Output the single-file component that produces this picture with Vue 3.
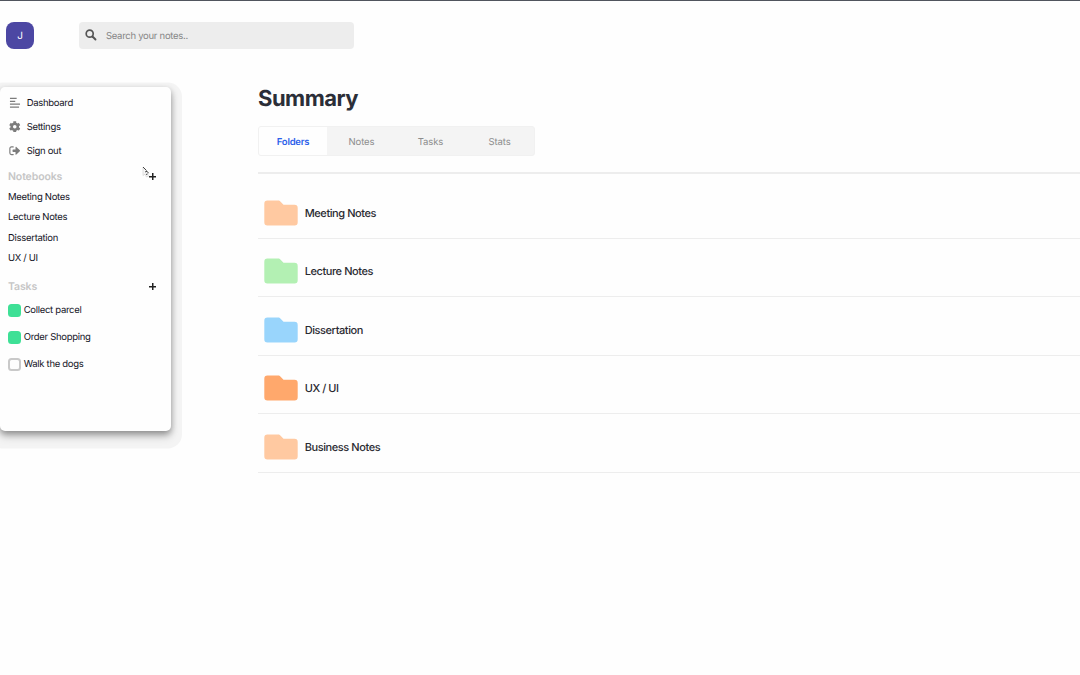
<script setup>
const notebooks = ['Meeting Notes', 'Lecture Notes', 'Dissertation', 'UX / UI']
const tasks = [
  { name: 'Collect parcel', done: true },
  { name: 'Order Shopping', done: true },
  { name: 'Walk the dogs', done: false },
]
const tabs = ['Folders', 'Notes', 'Tasks', 'Stats']
const folders = [
  { name: 'Meeting Notes', color: '#ffc9a1' },
  { name: 'Lecture Notes', color: '#b3f0b3' },
  { name: 'Dissertation', color: '#99d5fc' },
  { name: 'UX / UI', color: '#ffa86c' },
  { name: 'Business Notes', color: '#ffc9a1' },
]
</script>

<template>
  <div class="app">
    <header class="topbar">
      <div class="avatar">J</div>
      <div class="search">
        <svg class="glass" viewBox="0 0 12 12"><circle cx="4.7" cy="4.7" r="3.5" fill="none" stroke="#555" stroke-width="1.7" /><path d="M7.5 7.5 10.5 10.5" stroke="#555" stroke-width="1.9" stroke-linecap="round" /></svg>
        <span>Search your notes..</span>
      </div>
    </header>
    <div class="body">
      <aside class="sidebar">
        <nav class="menu">
          <a><svg viewBox="0 0 12 12"><path d="M1 1.5h7M1 4.5h5.500M1 7.500h10.500M1 10.500h9.500" stroke="#7c7c7c" stroke-width="1.200" /></svg><span>Dashboard</span></a>
          <a><svg viewBox="0 0 512 512"><path fill="#7c7c7c" d="M487 315l-43-25c4-23 4-46 0-69l43-25c5-3 7-9 6-14-11-36-30-68-55-95-4-4-10-5-15-2l-43 24c-18-15-39-27-61-35V25c0-6-4-10-9-12-36-8-73-8-109 0-6 2-10 6-10 12v49c-22 8-42 20-60 35L89 85c-5-3-11-2-15 2-25 27-44 59-55 95-2 5 1 11 5 14l43 25c-4 23-4 46 0 69l-43 25c-4 3-7 9-5 14 11 36 30 68 55 95 4 4 10 5 15 2l42-24c18 15 38 27 60 35v49c0 6 4 10 10 12 36 8 73 8 109 0 5-2 9-6 9-12v-49c22-8 43-20 61-35l43 24c5 3 11 2 15-2 25-27 44-59 55-95 1-5-1-11-6-14zM256 336a80 80 0 1 1 0-160 80 80 0 0 1 0 160z" /></svg><span>Settings</span></a>
          <a><svg viewBox="0 0 12 12"><path d="M4.4 2H2.6C1.5 2 .9 2.6.9 3.6v4.8c0 1 .6 1.6 1.7 1.6h1.8" fill="none" stroke="#7c7c7c" stroke-width="1.2" stroke-linecap="round" /><path d="M4.200 4.600h2.600V2.400c0-.5.5-.7.9-.4l3.600 3.500c.3.3.3.7 0 1L7.700 10c-.4.3-.9.1-.9-.4V7.400H4.200c-.3 0-.5-.2-.5-.5V5.100c0-.3.2-.5.5-.5z" fill="#7c7c7c" /></svg><span>Sign out</span></a>
        </nav>
        <div class="heading"><span>Notebooks</span><i class="plus"></i></div>
        <ul class="books"><li v-for="n in notebooks" :key="n"><span>{{ n }}</span></li></ul>
        <div class="heading tasks-heading"><span>Tasks</span><i class="plus"></i></div>
        <ul class="tasks">
          <li v-for="t in tasks" :key="t.name"><i class="box" :class="{ done: t.done }"></i><span>{{ t.name }}</span></li>
        </ul>
      </aside>
      <main class="content">
        <h1><span>Summary</span></h1>
        <div class="tabs"><span v-for="(t, i) in tabs" :key="t" class="tab" :class="{ active: i === 0 }">{{ t }}</span></div>
        <section class="folders">
          <div v-for="f in folders" :key="f.name" class="folder">
            <svg viewBox="0 0 34 26"><path :fill="f.color" d="M3.500.500H14c1.200 0 1.900.5 2.600 1.300l2.900 2.900h11c2.200 0 3.200 1.100 3.200 3.200v14.400c0 2.200-1 3.200-3.200 3.200h-27C1.300 25.500.300 24.500.300 22.300V3.700C.300 1.500 1.300.500 3.500.500z" /></svg>
            <span>{{ f.name }}</span>
          </div>
        </section>
      </main>
    </div>
    <svg class="cursor" viewBox="0 0 8 12"><path d="M1 1v8.500l2-1.500 1.500 3 2-.8L5.500 7.500H7z" fill="#f7f7f7" stroke="#ccc" stroke-width=".6" /><path d="M1 1 4.500 4.500M3 6l2-.8M4.500 5l2 2M4 8.500l1.500-.5" fill="none" stroke="#333" stroke-width=".9" /></svg>
  </div>
</template>

<style>
body { margin: 0; overflow: hidden; background: #fefefe; }
</style>
<style scoped>
.app { box-sizing: border-box; height: 675px; border-top: 1px solid #50555e; font-family: Inter, "Liberation Sans", sans-serif; font-size: 9.5px; letter-spacing: -.3px; text-rendering: geometricPrecision; color: #14141f; overflow: hidden; position: relative; }
.topbar { display: flex; padding: 20.5px 0 0 6px; height: 27.5px; }
.avatar { box-sizing: border-box; width: 28px; height: 27.5px; padding-top: 1px; border-radius: 8px; background: #4c47a3; color: #fff; display: grid; place-items: center; font-size: 10px; }
.search { box-sizing: border-box; margin-left: 44.6px; width: 275px; height: 27px; border-radius: 4px; background: #ededed; display: flex; align-items: center; padding-left: 6.3px; color: #858585; letter-spacing: -.27px; }
.search span { padding-top: 2.5px; }
.menu span { padding-top: 1.5px; }
.books span { padding-top: .8px; }
.glass { width: 12px; height: 12px; margin-right: 9px; }
.body { display: flex; padding-top: 37.5px; }
.sidebar { box-sizing: border-box; width: 171px; height: 344.5px; flex: none; background: #fefefe; padding: 4px 0 0 8px; border-radius: 5px; box-shadow: 0 3px 6px rgba(0, 0, 0, .34), 0 6px 10px rgba(0, 0, 0, .14), 0 6.5px 0 11px #f4f4f4; }
ul { margin: 0; padding: 0; list-style: none; }
.menu a { display: flex; align-items: center; height: 24.1px; }
.menu svg { width: 11.5px; height: 11.5px; margin: 0 6.2px 0 1px; }
.heading { display: flex; align-items: center; justify-content: space-between; height: 20px; padding-right: 15px; margin-top: 3.7px; color: #c6c6c6; font-weight: 600; font-size: 10.5px; letter-spacing: -.12px; }
.plus { width: 7px; height: 7px; background: linear-gradient(#222, #222) center / 7px 1.5px no-repeat, linear-gradient(#222, #222) center / 1.5px 7px no-repeat; }
.books li { display: flex; align-items: center; height: 20.6px; }
.tasks-heading { margin-top: 8px; }
.tasks li { display: flex; align-items: center; height: 27.1px; }
.box { box-sizing: border-box; width: 13px; height: 13px; border: 2px solid #c9c9c9; border-radius: 3.5px; margin: 0 2.7px 0 0; }
.box.done { background: #3ee096; border-color: #3ee096; }
.content { flex: 1; margin-left: 87px; }
h1 { margin: -4px 0 0; height: 31px; line-height: 33px; font-size: 22px; font-weight: 700; letter-spacing: -.5px; color: #2b2e38; }
.tabs { box-sizing: border-box; display: flex; width: 277px; height: 30px; margin-top: 12.5px; background: #f4f4f4; border: 1px solid #f1f1f1; border-radius: 3px; overflow: hidden; letter-spacing: -.1px; }
.tab { flex: 1; display: grid; place-items: center; padding-top: 2px; color: #8d8d8d; }
.tab.active { flex: none; width: 68px; background: #fefefe; color: #2c60ea; font-weight: 600; letter-spacing: -.25px; }
.folders { margin-top: 16px; border-top: 2px solid #ededed; padding-top: 6px; }
.folder { box-sizing: border-box; display: flex; align-items: center; height: 58.5px; border-bottom: 1px solid #ededed; padding: 7.5px 0 0 6.3px; font-size: 11px; font-weight: 500; letter-spacing: -.42px; color: #2a2a31; }
.folder svg { width: 34px; height: 26px; margin-right: 6.4px; }
.folder span { padding-top: .4px; }
.cursor { position: absolute; left: 142px; top: 165px; width: 8px; height: 12px; }
</style>
